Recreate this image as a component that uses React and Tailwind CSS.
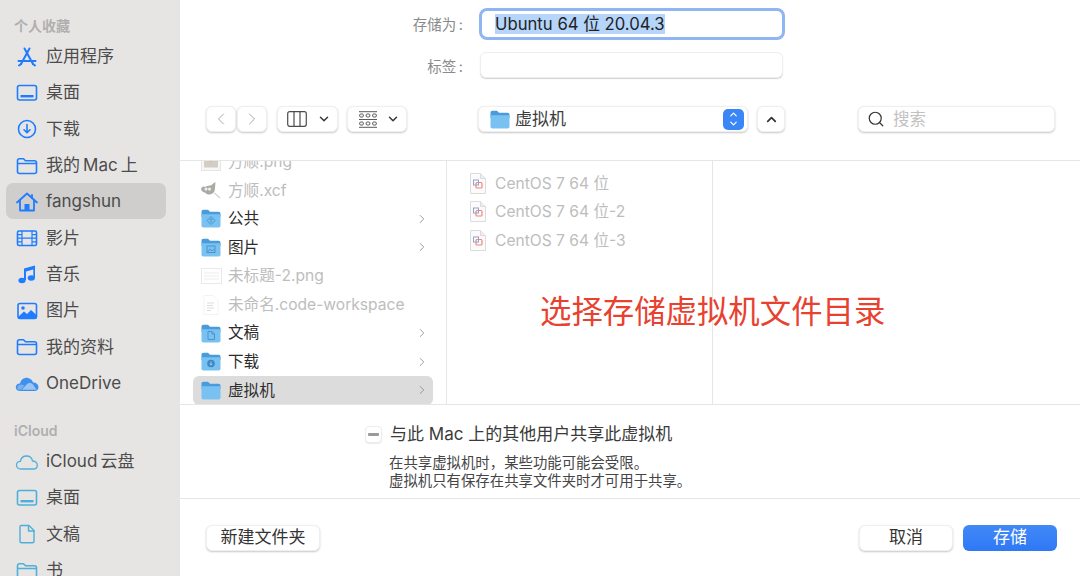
import { ChevronLeft, ChevronRight, ChevronDown, ChevronUp, Search } from "lucide-react";

const font = { fontFamily: '"Inter", "Liberation Sans", "Noto Sans CJK SC", sans-serif' };

function SideIcon({ name, color }) {
  const common = { fill: "none", stroke: color, strokeWidth: 1.6, strokeLinecap: "round", strokeLinejoin: "round" };
  return (
    <svg width="24" height="24" viewBox="0 0 24 24" className="shrink-0">
      {name === "apps" && (
        <g {...common} strokeWidth="2">
          <path d="M9.5 3.5 L18 19" />
          <path d="M14.5 3.5 L6 19" />
          <path d="M3.5 16 H20.5" />
          <path d="M4 20.5 L6 19 M18 19 L20 20.5" />
        </g>
      )}
      {name === "desktop" && (
        <g {...common}>
          <rect x="2.5" y="4.5" width="19" height="14.5" rx="2" />
          <rect x="5.5" y="14" width="13" height="2.4" fill={color} stroke="none" />
        </g>
      )}
      {name === "download" && (
        <g {...common}>
          <circle cx="12" cy="12" r="8.5" />
          <path d="M12 7.5 V15.5 M9 12.8 L12 15.8 L15 12.8" />
        </g>
      )}
      {name === "folder" && (
        <path {...common} d="M2.5 7 C2.5 5.5 3.3 4.8 4.5 4.8 H8.5 L10.5 6.8 H19.5 C20.8 6.8 21.5 7.5 21.5 8.8 V17.5 C21.5 18.8 20.8 19.5 19.5 19.5 H4.5 C3.3 19.5 2.5 18.8 2.5 17.5 Z M2.5 9.5 H21.5" />
      )}
      {name === "home" && (
        <g {...common} strokeWidth="1.8">
          <path d="M2 12.5 L12 3.5 L22 12.5" />
          <path d="M5 10.5 V20.5 H19 V10.5" />
          <rect x="9.5" y="14" width="5" height="6.5" fill={color} stroke="none" />
          <path d="M17 5 V8" />
        </g>
      )}
      {name === "film" && (
        <g {...common}>
          <rect x="2.5" y="5" width="19" height="14.5" rx="1.5" />
          <path d="M7 5 V19.5 M17 5 V19.5 M7 12.2 H17 M2.5 8.6 H7 M2.5 12.2 H7 M2.5 15.8 H7 M17 8.6 H21.5 M17 12.2 H21.5 M17 15.8 H21.5" strokeWidth="1.2" />
        </g>
      )}
      {name === "music" && (
        <g fill={color}>
          <path d="M9 6.5 L20 3.5 V7 L11 9.5 V18 H9 Z" />
          <path d="M18.3 5 H20 V16 H18.3 Z" />
          <ellipse cx="7" cy="18.5" rx="3.6" ry="2.8" />
          <ellipse cx="16.3" cy="16" rx="3.6" ry="2.8" />
        </g>
      )}
      {name === "photo" && (
        <g>
          <rect x="3" y="4.5" width="18.5" height="15" rx="2" fill="none" stroke={color} strokeWidth="1.6" />
          <circle cx="8" cy="9" r="1.8" fill={color} />
          <path d="M3 18 L9 12.5 L12 15 L16 11 L21.5 16 V19.5 H3 Z" fill={color} />
        </g>
      )}
      {name === "onedrive" && (
        <g>
          <path d="M5 20 C1.5 20 0.3 16.8 1 15 C1.8 13 3.5 12.3 5 12.5 C6 8.5 9.5 6.3 13 7 C15.8 7.5 17.5 9.5 18 11.5 C21 11.5 23.5 13.5 23.5 16.2 C23.5 18.5 21.8 20 19.5 20 Z" fill="#3f90ee" />
          <path d="M7 18.7 L12 13 C14 11.5 16.5 12 18 13.5 L21.5 18.7 Z" fill="#9cc5f2" />
          <path d="M3 18.7 C1.8 17.5 2 15 4 14 C6 13 8 13.5 9.5 15 L6 18.7 Z" fill="#78b0ee" />
        </g>
      )}
      {name === "cloud" && (
        <path {...common} strokeWidth="1.3" d="M6 19 C3 19 1.5 17 1.5 15 C1.5 12.8 3.2 11.3 5.3 11.3 C6 8 8.5 6 11.5 6 C14.8 6 17 8.3 17.5 11 C20.3 11 22.3 12.8 22.3 15.2 C22.3 17.5 20.5 19 18.3 19 Z" />
      )}
      {name === "doc" && (
        <g {...common} strokeWidth="1.4">
          <path d="M6 3.5 H14 L19 8.5 V19 C19 20 18.3 20.8 17.2 20.8 H6.8 C5.7 20.8 5 20 5 19 V5 C5 4 5.5 3.5 6 3.5 Z" />
          <path d="M13.5 3.5 V9 H19" />
        </g>
      )}
    </svg>
  );
}

function SideItem({ icon, label, color = "#1f7cff", active }) {
  return (
    <div className={`h-[36.3px] flex items-center rounded-[7px] pl-[9px] pt-[1px] gap-[7px] text-[17px] text-[#4c4c4c] whitespace-nowrap ${active ? "bg-[#cfcecc]" : ""}`}>
      <SideIcon name={icon} color={color} />
      <span className="leading-none">{label}</span>
    </div>
  );
}

function SideLabel({ children, className }) {
  return <div className={`h-[20px] flex items-center pl-[8px] text-[14px] font-semibold text-[#b0afae] ${className}`}>{children}</div>;
}

function Sidebar() {
  const cloud = "#4eb0da";
  return (
    <aside className="w-[180px] shrink-0 h-full overflow-hidden bg-[#e6e5e4] pl-[6px] pr-[14px] pt-[15px]">
      <SideLabel>个人收藏</SideLabel>
      <div className="mt-[3px]">
        <SideItem icon="apps" label="应用程序" />
        <SideItem icon="desktop" label="桌面" />
        <SideItem icon="download" label="下载" />
        <SideItem icon="folder" label={"我的\u2009Mac\u2009上"} />
        <SideItem icon="home" label="fangshun" active />
        <SideItem icon="film" label="影片" />
        <SideItem icon="music" label="音乐" />
        <SideItem icon="photo" label="图片" />
        <SideItem icon="folder" label="我的资料" />
        <SideItem icon="onedrive" label="OneDrive" />
      </div>
      <SideLabel className="mt-[20px]">iCloud</SideLabel>
      <div className="mt-[2px]">
        <SideItem icon="cloud" label={"iCloud\u2009云盘"} color={cloud} />
        <SideItem icon="desktop" label="桌面" color={cloud} />
        <SideItem icon="doc" label="文稿" color={cloud} />
        <SideItem icon="folder" label="书" color={cloud} />
      </div>
    </aside>
  );
}

function Folder({ glyph }) {
  return (
    <svg width="20" height="19" viewBox="0 0 20 19" className="shrink-0">
      <path d="M0.5 3 C0.5 1.5 1.2 0.8 2.5 0.8 H7 L9 2.8 H17.5 C18.8 2.8 19.5 3.5 19.5 5 V8 H0.5 Z" fill="#4a9bdc" />
      <path d="M0.5 5.2 H19.5 V16.5 C19.5 17.8 18.8 18.5 17.5 18.5 H2.5 C1.2 18.5 0.5 17.8 0.5 16.5 Z" fill="#79c1f0" />
      {glyph === "public" && <g fill="none" stroke="#4a95cf" strokeWidth="1"><path d="M10 7.5 L14 11.5 L10 15.5 L6 11.5 Z" /><path d="M10 13.5 V10 M8.7 11 L10 9.7 L11.3 11" /></g>}
      {glyph === "pics" && <g fill="none" stroke="#4a95cf" strokeWidth="1"><rect x="6" y="8" width="8" height="6.5" /><path d="M6.5 14 L9 11 L11 13 L12.5 11.5 L14 13" /></g>}
      {glyph === "docs" && <path d="M7 7.5 H11 L13.5 10 V15.5 H7 Z M11 7.5 V10 H13.5" fill="none" stroke="#4a95cf" strokeWidth="1" />}
      {glyph === "down" && <g><circle cx="10" cy="11.5" r="3.8" fill="#3d88c4" /><path d="M10 9.5 V13 M8.6 11.8 L10 13.2 L11.4 11.8" fill="none" stroke="#a5d6f5" strokeWidth="0.9" /></g>}
    </svg>
  );
}

function GimpIcon() {
  return (
    <svg width="22" height="19" viewBox="0 0 22 19" className="shrink-0 opacity-60">
      <path d="M1 8 C2 5 4 5 5 6 C7 4.5 10 5 11.5 4 C13 3 14 1.5 15.5 1 C15 3 15.5 4 15 6 C15 8 15 11 12.5 12.5 C10 14 7 14 5 11.5 C3 11.5 1.5 10 1 8 Z" fill="#77736c" />
      <circle cx="6" cy="8" r="1.5" fill="#e8e8e8" />
      <circle cx="9.5" cy="8" r="1.5" fill="#e8e8e8" />
      <path d="M14.5 12 L20 17" stroke="#b5b5b5" strokeWidth="1.2" />
    </svg>
  );
}

function ThumbIcon({ kind }) {
  if (kind === "png") {
    return (
      <svg width="20" height="19" viewBox="0 0 20 19" className="shrink-0 opacity-60">
        <rect x="0.5" y="0.5" width="19" height="18" fill="#f3f3f3" stroke="#d5d5d5" />
        <rect x="3" y="2.5" width="14" height="13" fill="#b8ac9c" />
        <rect x="8" y="2.5" width="4" height="7" fill="#8d8577" />
      </svg>
    );
  }
  if (kind === "shot") {
    return (
      <svg width="21" height="16" viewBox="0 0 21 16" className="shrink-0 opacity-60">
        <rect x="0.5" y="0.5" width="20" height="15" fill="#fff" stroke="#dcdcdc" />
        <path d="M3 5 H18 M3 8 H18 M3 11 H18" stroke="#e4e4e4" strokeWidth="1.2" />
      </svg>
    );
  }
  return (
    <svg width="16" height="20" viewBox="0 0 16 20" className="shrink-0 opacity-70">
      <path d="M1 0.5 H10 L15 5.5 V19.5 H1 Z" fill="#fff" stroke="#efefef" />
      <path d="M4 8 H11 M4 10.5 H10 M4 13 H11 M4 15.5 H8" stroke="#cfcfcf" />
    </svg>
  );
}

function VmIcon() {
  return (
    <svg width="16" height="21" viewBox="0 0 16 21" className="shrink-0">
      <path d="M0.5 0.5 H10.5 L15.5 5.5 V20.5 H0.5 Z" fill="#fbfbfb" stroke="#dcdcdc" />
      <path d="M10.5 0.5 V5.5 H15.5" fill="#eeeeee" stroke="#dcdcdc" />
      <rect x="3.5" y="7" width="5" height="5" fill="none" stroke="#8da6d6" />
      <rect x="6" y="9.5" width="6" height="5.5" rx="1" fill="none" stroke="#e88a80" strokeWidth="1.2" />
    </svg>
  );
}

function FileRow({ icon, label, dim, chevron, selected }) {
  return (
    <div className={`h-[28.6px] flex items-center mx-[13px] pl-[8px] pr-[4px] gap-[7px] rounded-[6px] text-[15.6px] whitespace-nowrap ${selected ? "bg-[#dcdcdc]" : ""} ${dim ? "text-[#bdbdbd]" : "text-[#2c2c2c]"}`}>
      <span className="w-[20px] flex justify-center shrink-0">{icon}</span>
      <span className="flex-1 leading-none">{label}</span>
      {chevron && <ChevronRight size={14} strokeWidth={1.5} className="text-[#8e8e8e]" />}
    </div>
  );
}

function FormRow({ label, labelClass, children, className }) {
  return (
    <div className={`flex items-center ${className}`}>
      <div className={`w-[283px] text-right text-[14.5px] text-[#8a8a8a] whitespace-nowrap ${labelClass}`}>{label}</div>
      {children}
    </div>
  );
}

function ToolBtn({ children, className }) {
  return (
    <div className={`h-[26px] flex items-center bg-white rounded-[6px] border border-[#efefef] shadow-[0_1px_2px_rgba(0,0,0,0.22)] ${className}`}>
      {children}
    </div>
  );
}

function Toolbar() {
  return (
    <div className="flex items-center mt-[28px] pl-[26px]">
      <ToolBtn className="w-[30px] justify-center"><ChevronLeft size={20} strokeWidth={1.2} className="text-[#a8a8a8]" /></ToolBtn>
      <ToolBtn className="w-[30px] ml-[1px] justify-center"><ChevronRight size={20} strokeWidth={1.2} className="text-[#a8a8a8]" /></ToolBtn>
      <ToolBtn className="w-[61px] ml-[10px] pl-[3px] gap-[10px] justify-center">
        <svg width="20" height="16" viewBox="0 0 20 16">
          <rect x="0.7" y="0.7" width="18.6" height="14.6" rx="2" fill="none" stroke="#4c4c4c" strokeWidth="1.2" />
          <path d="M7 0.7 V15.3 M13 0.7 V15.3" stroke="#4c4c4c" strokeWidth="1.2" />
        </svg>
        <ChevronDown size={14} strokeWidth={2.6} className="text-[#3a3a3a]" />
      </ToolBtn>
      <ToolBtn className="w-[60px] ml-[9px] pl-[4px] gap-[9px] justify-center">
        <svg width="18" height="17" viewBox="0 0 18 17" fill="none" stroke="#5a5a5a">
          <path d="M0 0.7 H18 M0 16.3 H18 M0 8.5 H18" strokeWidth="1" />
          <rect x="0.7" y="3" width="3.6" height="3" rx="1" />
          <rect x="7.2" y="3" width="3.6" height="3" rx="1" />
          <rect x="13.7" y="3" width="3.6" height="3" rx="1" />
          <rect x="0.7" y="11" width="3.6" height="3" rx="1" />
          <rect x="7.2" y="11" width="3.6" height="3" rx="1" />
          <rect x="13.7" y="11" width="3.6" height="3" rx="1" />
        </svg>
        <ChevronDown size={14} strokeWidth={2.6} className="text-[#3a3a3a]" />
      </ToolBtn>
      <ToolBtn className="w-[270px] ml-[71px] pl-[11px] pr-[3px] justify-between">
        <div className="flex items-center gap-[5px] text-[17px] text-[#3c3c3c]">
          <Folder />
          <span className="pt-[1px]">虚拟机</span>
        </div>
        <div className="w-[21px] h-[21px] rounded-[5px] bg-[#3b86f7] flex flex-col items-center justify-center text-white">
          <ChevronUp size={11} strokeWidth={2.6} className="-mb-[2px]" />
          <ChevronDown size={11} strokeWidth={2.6} />
        </div>
      </ToolBtn>
      <ToolBtn className="w-[28px] ml-[9px] justify-center"><ChevronUp size={15} strokeWidth={2.8} className="text-[#333]" /></ToolBtn>
      <ToolBtn className="w-[197px] ml-[73px] pl-[8px] gap-[8px] justify-start">
        <Search size={18} strokeWidth={1.6} className="text-[#333]" />
        <span className="text-[16.5px] text-[#c2c2c2]">搜索</span>
      </ToolBtn>
    </div>
  );
}

function Browser() {
  return (
    <div className="relative h-[245px] flex border-y border-[#e6e6e6] overflow-hidden">
      <div className="w-[266px] shrink-0 -mt-[13.6px]">
        <FileRow dim icon={<ThumbIcon kind="png" />} label="方顺.png" />
        <FileRow dim icon={<GimpIcon />} label="方顺.xcf" />
        <FileRow icon={<Folder glyph="public" />} label="公共" chevron />
        <FileRow icon={<Folder glyph="pics" />} label="图片" chevron />
        <FileRow dim icon={<ThumbIcon kind="shot" />} label="未标题-2.png" />
        <FileRow dim icon={<ThumbIcon kind="code" />} label="未命名.code-workspace" />
        <FileRow icon={<Folder glyph="docs" />} label="文稿" chevron />
        <FileRow icon={<Folder glyph="down" />} label="下载" chevron />
        <FileRow selected icon={<Folder />} label="虚拟机" chevron />
      </div>
      <div className="w-[267px] shrink-0 border-x border-[#e6e6e6] pt-[8px]">
        <FileRow dim icon={<VmIcon />} label="CentOS 7 64 位" />
        <FileRow dim icon={<VmIcon />} label="CentOS 7 64 位-2" />
        <FileRow dim icon={<VmIcon />} label="CentOS 7 64 位-3" />
      </div>
      <div className="absolute left-[360px] top-[136px] text-[31.4px] leading-none text-[#e8412f] whitespace-nowrap">
        选择存储虚拟机文件目录
      </div>
    </div>
  );
}

export default function App() {
  return (
    <div className="w-[1080px] h-[576px] flex overflow-hidden bg-white" style={font}>
      <Sidebar />
      <main className="flex-1 flex flex-col">
        <div className="h-[160px] pt-[8px]">
          <FormRow label={"存储为\u2009:"} labelClass="pt-[1px]">
            <div className="w-[306px] h-[32px] ml-[16px] flex items-center rounded-[8px] border-[3px] border-[#8fb5f3] bg-white pl-[13px]">
              <span className="bg-[#b5d5fb] text-[16.7px] leading-[20px] text-[#222] whitespace-nowrap">Ubuntu 64 位 20.04.3</span>
            </div>
          </FormRow>
          <FormRow label={"标签\u2009:"} labelClass="pt-[3px]" className="mt-[12px]">
            <div className="w-[303px] h-[26px] ml-[17px] rounded-[6px] bg-white border border-[#eeeeee] shadow-[0_1px_1px_rgba(0,0,0,0.18)]" />
          </FormRow>
          <Toolbar />
        </div>
        <Browser />
        <div className="h-[94px] border-b border-[#e6e6e6] pl-[185px] pt-[21px]">
          <div className="flex items-center gap-[8px] text-[17px] text-[#3a3a3a] leading-none whitespace-nowrap">
            <div className="w-[17px] h-[17px] rounded-[4px] bg-white border border-[#ececec] shadow-[0_1px_1px_rgba(0,0,0,0.08)] flex items-center justify-center">
              <div className="w-[11px] h-[3px] rounded-[1px] bg-[#9a9a9a]" />
            </div>
            <span>与此 Mac 上的其他用户共享此虚拟机</span>
          </div>
          <div className="ml-[24px] mt-[11px] text-[14.4px] leading-[18px] text-[#454545] whitespace-nowrap">
            <div>在共享虚拟机时，某些功能可能会受限。</div>
            <div>虚拟机只有保存在共享文件夹时才可用于共享。</div>
          </div>
        </div>
        <div className="flex-1 flex items-start justify-between pl-[26px] pr-[23px] pt-[26px] text-[17px]">
          <div className="w-[114px] h-[26px] flex items-center justify-center rounded-[6px] bg-white border border-[#efefef] shadow-[0_1px_2px_rgba(0,0,0,0.22)] text-[#333]">新建文件夹</div>
          <div className="flex gap-[10px]">
            <div className="w-[94px] h-[26px] flex items-center justify-center rounded-[6px] bg-white border border-[#efefef] shadow-[0_1px_2px_rgba(0,0,0,0.22)] text-[#333]">取消</div>
            <div className="w-[94px] h-[26px] flex items-center justify-center rounded-[6px] bg-gradient-to-b from-[#4189f8] to-[#2f78f5] text-white">存储</div>
          </div>
        </div>
      </main>
    </div>
  );
}
